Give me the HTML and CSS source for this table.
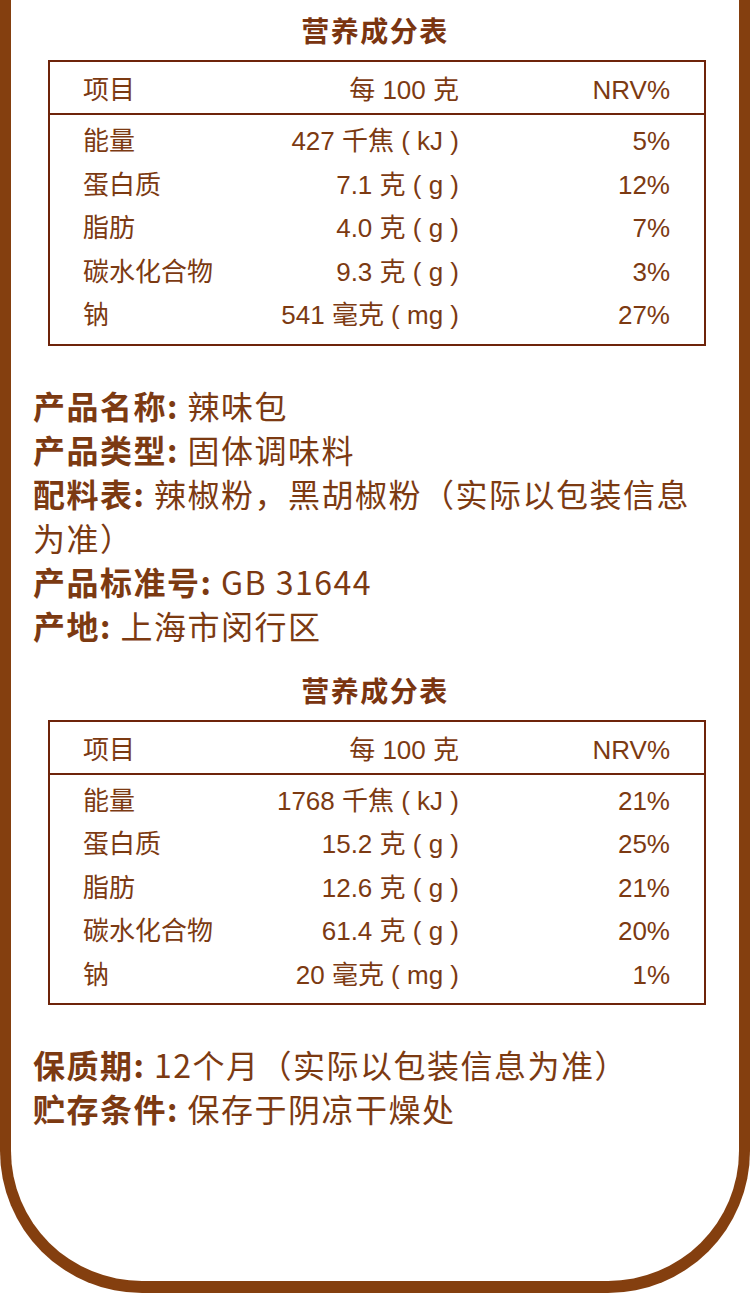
FILE: index.html
```html
<!DOCTYPE html>
<html lang="zh-CN">
<head>
<meta charset="utf-8">
<title>营养成分表</title>
<link rel="stylesheet" href="styles.css">
</head>
<body>
<div class="frame">
  <h2 class="title">营养成分表</h2>
  <div class="table">
    <div class="row head">
      <span class="c1">项目</span><span class="c2">每 100 克</span><span class="c3">NRV%</span>
    </div>
    <div class="body">
      <div class="row"><span class="c1">能量</span><span class="c2">427 千焦 ( kJ )</span><span class="c3">5%</span></div>
      <div class="row"><span class="c1">蛋白质</span><span class="c2">7.1 克 ( g )</span><span class="c3">12%</span></div>
      <div class="row"><span class="c1">脂肪</span><span class="c2">4.0 克 ( g )</span><span class="c3">7%</span></div>
      <div class="row"><span class="c1">碳水化合物</span><span class="c2">9.3 克 ( g )</span><span class="c3">3%</span></div>
      <div class="row"><span class="c1">钠</span><span class="c2">541 毫克 ( mg )</span><span class="c3">27%</span></div>
    </div>
  </div>

  <div class="info">
    <p><b>产品名称:</b> 辣味包</p>
    <p><b>产品类型:</b> 固体调味料</p>
    <p><b>配料表:</b> 辣椒粉，黑胡椒粉（实际以包装信息为准）</p>
    <p><b>产品标准号:</b> GB 31644</p>
    <p><b>产地:</b> 上海市闵行区</p>
  </div>

  <h2 class="title">营养成分表</h2>
  <div class="table">
    <div class="row head">
      <span class="c1">项目</span><span class="c2">每 100 克</span><span class="c3">NRV%</span>
    </div>
    <div class="body">
      <div class="row"><span class="c1">能量</span><span class="c2">1768 千焦 ( kJ )</span><span class="c3">21%</span></div>
      <div class="row"><span class="c1">蛋白质</span><span class="c2">15.2 克 ( g )</span><span class="c3">25%</span></div>
      <div class="row"><span class="c1">脂肪</span><span class="c2">12.6 克 ( g )</span><span class="c3">21%</span></div>
      <div class="row"><span class="c1">碳水化合物</span><span class="c2">61.4 克 ( g )</span><span class="c3">20%</span></div>
      <div class="row"><span class="c1">钠</span><span class="c2">20 毫克 ( mg )</span><span class="c3">1%</span></div>
    </div>
  </div>

  <div class="info">
    <p><b>保质期:</b> 12个月（实际以包装信息为准）</p>
    <p><b>贮存条件:</b> 保存于阴凉干燥处</p>
  </div>
</div>
</body>
</html>
```
FILE: styles.css
```css
html, body {
  margin: 0;
  padding: 0;
  background: #ffffff;
}

body {
  width: 750px;
  height: 1302px;
  overflow: hidden;
  color: #7c3a12;
  font-family: "Noto Sans CJK SC", "Liberation Sans", sans-serif;
}

.frame {
  box-sizing: border-box;
  width: 750px;
  height: 1293px;
  border: 11px solid #843f0f;
  border-top: 0;
  border-bottom-width: 12px;
  border-radius: 0 0 142px 142px;
  padding-top: 10px;
}

.title {
  margin: 0;
  text-align: center;
  font-size: 28px;
  font-weight: 700;
  line-height: 40px;
  letter-spacing: 1.5px;
  color: #7a3510;
}

.table {
  box-sizing: border-box;
  width: 658px;
  margin: 10px 0 0 37px;
  border: 2px solid #6e240a;
  font-family: "Liberation Sans", "Noto Sans CJK SC", sans-serif;
  font-size: 26px;
}

.row {
  display: grid;
  grid-template-columns: 176px 200px 211px;
  padding: 0 34px 0 33px;
  height: 43.5px;
  line-height: 43.5px;
  white-space: nowrap;
}

.row.head {
  height: 46px;
  line-height: 46px;
  padding-top: 5px;
  border-bottom: 2px solid #6e240a;
}

.body {
  padding: 5px 0 6px;
}

.c2, .c3 {
  text-align: right;
}

.info {
  margin: 37px 0 23px 22px;
  width: 677px;
  font-size: 32px;
  line-height: 44px;
  letter-spacing: 1.5px;
}

.info p {
  margin: 0;
}

.info b {
  font-weight: 700;
}
```
